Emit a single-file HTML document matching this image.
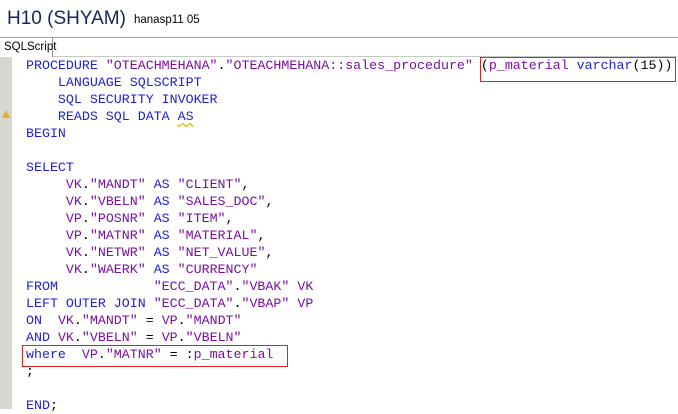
<!DOCTYPE html>
<html><head><style>
body{margin:0;width:678px;height:409px;background:#fff;position:relative;overflow:hidden;font-family:"Liberation Sans",sans-serif}
.h{position:absolute;left:7px;top:8px;font-size:19px;color:#17235e}
.s{position:absolute;left:134px;top:14px;font-size:11.5px;color:#000}
.hr{position:absolute;left:0;top:37px;width:678px;height:1px;background:#a0a0a0}
.tab{position:absolute;left:0;top:38px;width:53px;height:19px;border-right:1px solid #919b9c;background:#fff;font-size:11.5px;line-height:19px;padding-left:4px;box-sizing:border-box}
.tl{position:absolute;left:53px;top:56px;width:625px;height:1px;background:#c8c8c8}
.g{position:absolute;left:0;top:57px;width:12px;height:352px;background:#d8d6d0}
pre{position:absolute;left:26px;top:57px;margin:0;font-family:"Liberation Mono",monospace;font-size:13.3px;line-height:17px;color:#000}
.k{color:#2020d8}.q{color:#7a0fa0}
.b{position:absolute;border:1px solid #e02020}
.u{text-decoration:underline wavy #e0c000;text-underline-offset:2px}
.w{position:absolute;left:2px;top:110px;width:0;height:0;border-left:4px solid transparent;border-right:4px solid transparent;border-bottom:8px solid #e0b020}
</style></head><body>
<div class="h">H10 (SHYAM)</div><div class="s">hanasp11 05</div>
<div class="hr"></div><div class="tab">SQLScript</div><div class="tl"></div>
<div class="g"></div><div class="w"></div>
<pre><span class="k">PROCEDURE</span> <span class="q">"OTEACHMEHANA"</span>.<span class="q">"OTEACHMEHANA::sales_procedure"</span> (<span class="q">p_material</span> <span class="k">varchar</span>(15))
    <span class="k">LANGUAGE SQLSCRIPT</span>
    <span class="k">SQL SECURITY INVOKER</span>
    <span class="k">READS SQL DATA <span class="u">AS</span></span>
<span class="k">BEGIN</span>

<span class="k">SELECT</span>
     <span class="q">VK</span>.<span class="q">"MANDT"</span> <span class="k">AS</span> <span class="q">"CLIENT"</span>,
     <span class="q">VK</span>.<span class="q">"VBELN"</span> <span class="k">AS</span> <span class="q">"SALES_DOC"</span>,
     <span class="q">VP</span>.<span class="q">"POSNR"</span> <span class="k">AS</span> <span class="q">"ITEM"</span>,
     <span class="q">VP</span>.<span class="q">"MATNR"</span> <span class="k">AS</span> <span class="q">"MATERIAL"</span>,
     <span class="q">VK</span>.<span class="q">"NETWR"</span> <span class="k">AS</span> <span class="q">"NET_VALUE"</span>,
     <span class="q">VK</span>.<span class="q">"WAERK"</span> <span class="k">AS</span> <span class="q">"CURRENCY"</span>
<span class="k">FROM</span>            <span class="q">"ECC_DATA"</span>.<span class="q">"VBAK"</span> <span class="q">VK</span>
<span class="k">LEFT OUTER JOIN</span> <span class="q">"ECC_DATA"</span>.<span class="q">"VBAP"</span> <span class="q">VP</span>
<span class="k">ON</span>  <span class="q">VK</span>.<span class="q">"MANDT"</span> = <span class="q">VP</span>.<span class="q">"MANDT"</span>
<span class="k">AND</span> <span class="q">VK</span>.<span class="q">"VBELN"</span> = <span class="q">VP</span>.<span class="q">"VBELN"</span>
<span class="k">where</span>  <span class="q">VP</span>.<span class="q">"MATNR"</span> = :<span class="q">p_material</span>
;

<span class="k">END</span>;</pre>
<div class="b" style="left:480px;top:57px;width:194px;height:23px"></div>
<div class="b" style="left:22px;top:345px;width:264px;height:20px"></div>
</body></html>
